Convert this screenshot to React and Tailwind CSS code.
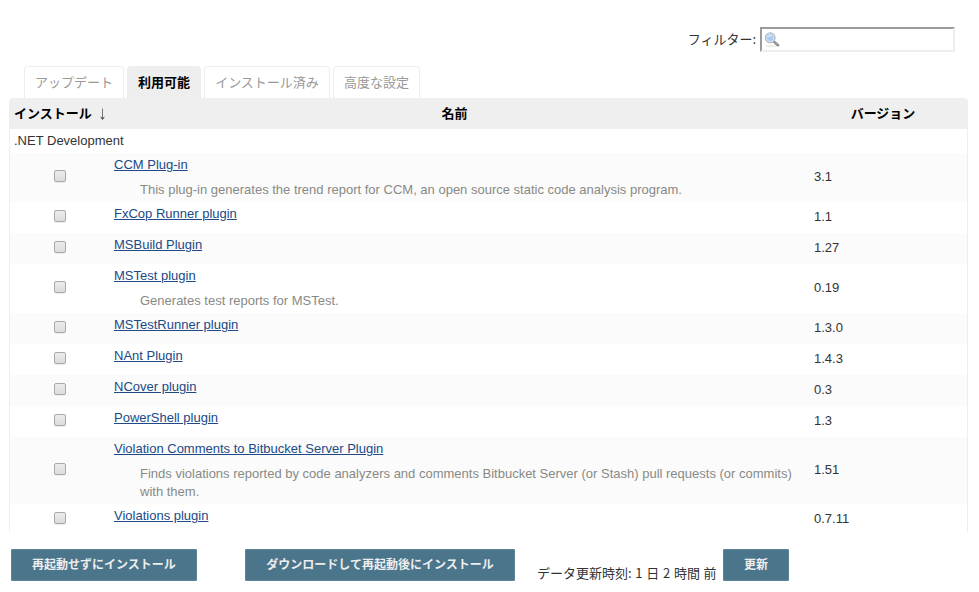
const plugins = [
  { name: 'CCM Plug-in', version: '3.1', height: 'h-[49px]', description: 'This plug-in generates the trend report for CCM, an open source static code analysis program.' },
  { name: 'FxCop Runner plugin', version: '1.1', height: 'h-[31px]' },
  { name: 'MSBuild Plugin', version: '1.27', height: 'h-[31px]' },
  { name: 'MSTest plugin', version: '0.19', height: 'h-[49px]', description: 'Generates test reports for MSTest.' },
  { name: 'MSTestRunner plugin', version: '1.3.0', height: 'h-[31px]' },
  { name: 'NAnt Plugin', version: '1.4.3', height: 'h-[31px]' },
  { name: 'NCover plugin', version: '0.3', height: 'h-[31px]' },
  { name: 'PowerShell plugin', version: '1.3', height: 'h-[31px]' },
  { name: 'Violation Comments to Bitbucket Server Plugin', version: '1.51', height: 'h-[67px]', description: 'Finds violations reported by code analyzers and comments Bitbucket Server (or Stash) pull requests (or commits) with them.' },
  { name: 'Violations plugin', version: '0.7.11', height: 'h-[31px]' },
];

const tabs = [
  { label: 'アップデート', width: 'w-[100px]' },
  { label: '利用可能', width: 'w-[74px]', active: true },
  { label: 'インストール済み', width: 'w-[126px]' },
  { label: '高度な設定', width: 'w-[87px]' },
];

function SearchIcon() {
  return (
    <svg width="16" height="16" viewBox="0 0 16 16" className="block">
      <ellipse cx="7" cy="14" rx="6" ry="1.3" fill="#ededed" />
      <path d="M10 9.6 L14 13.2" stroke="#858585" strokeWidth="2.6" strokeLinecap="round" />
      <path d="M10.6 9.8 L13.8 12.6" stroke="#b5b5b5" strokeWidth="0.8" strokeLinecap="round" />
      <circle cx="6.2" cy="5.8" r="4.9" fill="#b9d3ef" stroke="#b0b8c2" strokeWidth="1.1" />
      <circle cx="6.2" cy="5.8" r="3.8" fill="#aecbee" stroke="#dce9f7" strokeWidth="0.8" />
      <path d="M3.4 5.2 C4 3.4 6.2 2.6 8.2 3.6 C7.2 5 5.4 4.6 3.4 5.2Z" fill="#dceafa" />
    </svg>
  );
}

function SortArrow() {
  return (
    <svg width="7" height="13" viewBox="0 0 7 13" className="ml-[7px] mt-[2px] inline-block align-[-3px]">
      <path d="M3.5 0.5V11" stroke="#777777" strokeWidth="1" />
      <path d="M1 8.6L3.5 12L6 8.6L3.5 9.8Z" fill="#444444" />
    </svg>
  );
}

function PluginRow({ plugin, striped }) {
  return (
    <div className={`flex shrink-0 ${plugin.height} ${striped ? 'bg-[#fbfbfb]' : 'bg-white'}`}>
      <div className="flex w-[100px] items-center justify-center pb-[3px]">
        <input
          type="checkbox"
          aria-label={plugin.name}
          className="size-3 appearance-none rounded-[2px] border border-[#a9a9a9] bg-linear-to-b from-[#ececec] to-[#dcdcdc] shadow-[0_1px_0_#ececec]"
        />
      </div>
      <div className="w-[700px] pt-[3px] pl-1">
        <a href="#" className="block w-fit leading-[18px] text-[#204a87] underline">{plugin.name}</a>
        {plugin.description && (
          <div className="mt-[7px] pl-[26px] leading-[18px] text-[#888a85]">{plugin.description}</div>
        )}
      </div>
      <div className="flex items-center pl-1 pb-px">{plugin.version}</div>
    </div>
  );
}

function ActionButton({ children, className }) {
  return (
    <button className={`h-8 shrink-0 rounded-[1px] border border-[#5a8298] bg-[#4b758b] text-[12px] font-bold text-[#eeeeee] ${className}`}>
      {children}
    </button>
  );
}

export default function App() {
  return (
    <div className="h-[592px] w-[979px] overflow-hidden bg-white font-['Liberation_Sans','Noto_Sans_CJK_JP',sans-serif] text-[13px] text-[#333333]">
      <div className="flex h-[66px] items-start justify-end pt-[27px] pr-6 font-['Noto_Sans_CJK_JP',sans-serif]">
        <label htmlFor="filter" className="mr-[4px] leading-6">フィルター:</label>
        <div className="flex h-[25px] w-[195px] items-center border-2 border-t-[#9a9a9a] border-r-[#eeeeee] border-b-[#eeeeee] border-l-[#9a9a9a] pl-[2px]">
          <SearchIcon />
          <input id="filter" className="min-w-0 flex-1 outline-none" />
        </div>
      </div>

      <div className="flex h-8 gap-[3px] pl-6">
        {tabs.map((tab) => (
          <div
            key={tab.label}
            className={`flex items-center justify-center rounded-t-[4px] border border-b-0 border-[#eeeeee] whitespace-nowrap ${tab.width} ${tab.active ? 'bg-[#eeeeee] font-bold text-black' : 'text-[#999999]'}`}
          >
            {tab.label}
          </div>
        ))}
      </div>

      <div className="ml-[9px] flex h-[31px] w-[959px] items-center rounded-t-[4px] bg-[#efefef] font-bold text-black">
        <div className="flex w-[101px] items-center pl-[5px] whitespace-nowrap">
          インストール<SortArrow />
        </div>
        <div className="w-[689px] text-center">名前</div>
        <div className="w-[168px] text-center">バージョン</div>
      </div>

      <div className="ml-[9px] flex h-[403px] w-[959px] flex-col overflow-hidden border-x border-[#eeeeee]">
        <div className="h-6 shrink-0 pl-1 leading-[23px]">.NET Development</div>
        {plugins.map((plugin, index) => (
          <PluginRow key={plugin.name} plugin={plugin} striped={index % 2 === 0} />
        ))}
      </div>

      <div className="flex pt-[17px] pl-[11px]">
        <ActionButton className="w-[186px]">再起動せずにインストール</ActionButton>
        <ActionButton className="ml-12 w-[270px]">ダウンロードして再起動後にインストール</ActionButton>
        <div className="ml-[22px] w-[186px] pt-[15px] font-['Noto_Sans_CJK_JP',sans-serif] leading-[18px] whitespace-nowrap [word-spacing:0.8px]">
          データ更新時刻: 1 日 2 時間 前
        </div>
        <ActionButton className="w-[66px]">更新</ActionButton>
      </div>
    </div>
  );
}
